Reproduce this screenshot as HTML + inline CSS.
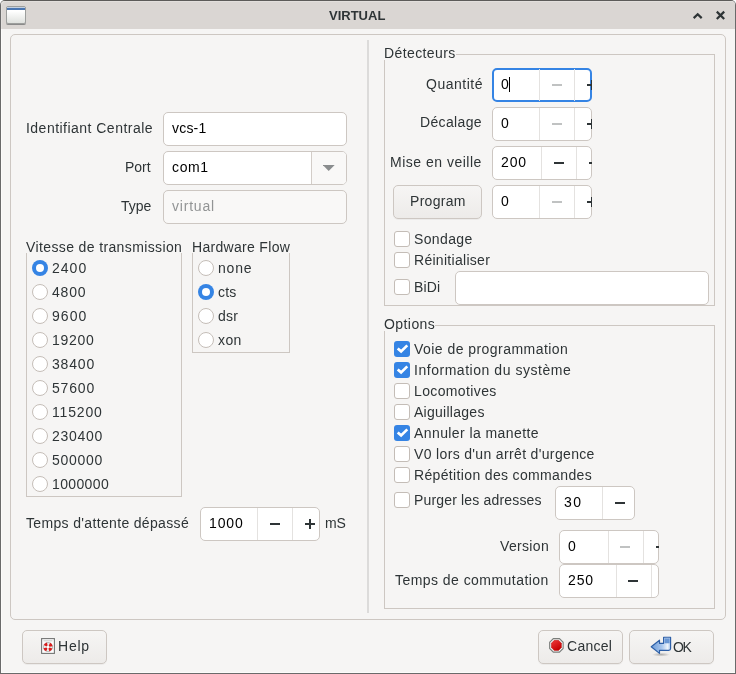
<!DOCTYPE html>
<html><head><meta charset="utf-8"><style>
html,body{margin:0;padding:0;background:#fff;width:736px;height:674px;overflow:hidden;position:relative;}
body{font-family:"Liberation Sans",sans-serif;}
#win{position:absolute;left:0;top:0;width:734px;height:672px;border:1px solid #6a6a6a;border-top-color:#5c5b59;border-radius:5px 5px 0 0;background:#f6f5f4;box-shadow:inset 1px 0 0 #fcfbfa, inset 0 -1px 0 #fcfbfa;}
#title{position:absolute;left:1px;top:1px;width:734px;height:28px;background:#dad6d3;border-radius:4px 4px 0 0;box-shadow:inset 1px 1px 0 #e2dfdc;}
#wicon{position:absolute;left:6px;top:6px;width:18px;height:16px;border:1px solid #9c9e9c;border-radius:2px;background:linear-gradient(#fff 25%,#dfe1de);box-shadow:0 1px 0 #8a8a8a;}
#wicon .blue{position:absolute;left:0px;top:1px;width:18px;height:2px;background:#4a76b2;box-shadow:0 -1px 0 #c4d0e0;}
.tt{position:absolute;will-change:transform;font:bold 13px/16px "Liberation Sans",sans-serif;color:#2e3436;white-space:nowrap;}
.t{position:absolute;font-size:14px;line-height:16px;white-space:nowrap;will-change:transform;}
.mframe{position:absolute;border:1px solid #cdc7c2;border-radius:5px;}
.frame{position:absolute;border:1px solid #cdc7c2;}
.lblbg{position:absolute;background:#f6f5f4;}
.sep{position:absolute;background:#dcdbda;}
.entry{position:absolute;box-sizing:border-box;border:1px solid #cdc7c2;border-radius:5px;background:#fff;}
.entry.focus{border:2px solid #3584e4;}
.div{position:absolute;width:1px;background:#e4e2e0;}
.bar{position:absolute;}
.clip{position:absolute;overflow:hidden;}
.radio{position:absolute;box-sizing:border-box;width:16px;height:16px;border-radius:50%;border:1px solid #c4bdb7;background:#fff;}
.radio.on{border:none;background:#3584e4;}
.radio.on::after{content:"";position:absolute;left:4px;top:4px;width:8px;height:8px;border-radius:50%;background:#fff;}
.chk{position:absolute;box-sizing:border-box;width:16px;height:16px;border-radius:3px;border:1px solid #c4bdb7;background:#fff;}
.chk.on{border:none;background:#3584e4;}
.chk svg{position:absolute;left:0;top:0;}
.btn{position:absolute;box-sizing:border-box;border:1px solid #cdc7c2;border-radius:5px;background:linear-gradient(#f6f5f4,#edebe9);box-shadow:0 1px 0 rgba(0,0,0,0.04);}
</style></head><body>
<div id="win"></div>
<div id="title"></div>
<div id="wicon"><div class="blue"></div></div>
<div class="tt" style="left:329px;top:8px;">VIRTUAL</div>
<svg style="position:absolute;left:690px;top:9px" width="40" height="14" viewBox="0 0 40 14"><path d="M3.7 9.1 L7.7 5.2 L11.7 9.1" fill="none" stroke="#2e3436" stroke-width="2.2"/><path d="M26.8 2.6 L34.2 10 M34.2 2.6 L26.8 10" fill="none" stroke="#2e3436" stroke-width="2.2"/></svg>
<div class="mframe" style="left:10px;top:34px;width:714px;height:584px"></div>
<div class="sep" style="left:367px;top:40px;width:2px;height:573px"></div>
<div class="t" style="left:25.7px;top:120.0px;letter-spacing:0.474px;color:#2e3436;">Identifiant Centrale</div>
<div class="entry" style="left:163px;top:112px;width:184px;height:34px;background:#fff"></div>
<div class="t" style="left:172.4px;top:120.0px;letter-spacing:0.197px;color:#000;">vcs-1</div>
<div class="t" style="left:125.4px;top:159.0px;letter-spacing:-0.005px;color:#2e3436;">Port</div>
<div class="entry" style="left:163px;top:151px;width:184px;height:34px"></div>
<div style="position:absolute;left:312px;top:152px;width:34px;height:32px;background:#f9f8f7;border-radius:0 4px 4px 0"></div>
<div class="div" style="left:311px;top:152px;height:32px;background:#d3cdc8"></div>
<svg style="position:absolute;left:323px;top:165px" width="13" height="7" viewBox="0 0 13 7"><path d="M-0.3 0 L11.7 0 L5.7 6 Z" fill="#8a8d8e"/></svg>
<div class="t" style="left:172.0px;top:159.0px;letter-spacing:0.640px;color:#000;">com1</div>
<div class="t" style="left:121.2px;top:198.0px;letter-spacing:0.002px;color:#2e3436;">Type</div>
<div class="entry" style="left:163px;top:190px;width:184px;height:34px;background:#f9f8f7"></div>
<div class="t" style="left:172.4px;top:198.0px;letter-spacing:0.793px;color:#929495;">virtual</div>
<div class="t" style="left:26.2px;top:239.0px;letter-spacing:0.377px;color:#2e3436;">Vitesse de transmission</div>
<div class="frame" style="left:26px;top:253px;width:154px;height:243px;border-top:none"></div>
<div class="radio on" style="left:32px;top:260px"></div>
<div class="t" style="left:52.1px;top:259.6px;letter-spacing:1.023px;color:#2e3436;">2400</div>
<div class="radio" style="left:32px;top:284px"></div>
<div class="t" style="left:52.3px;top:283.6px;letter-spacing:0.795px;color:#2e3436;">4800</div>
<div class="radio" style="left:32px;top:308px"></div>
<div class="t" style="left:52.0px;top:307.6px;letter-spacing:1.067px;color:#2e3436;">9600</div>
<div class="radio" style="left:32px;top:332px"></div>
<div class="t" style="left:52.0px;top:331.6px;letter-spacing:0.716px;color:#2e3436;">19200</div>
<div class="radio" style="left:32px;top:356px"></div>
<div class="t" style="left:52.3px;top:355.6px;letter-spacing:0.825px;color:#2e3436;">38400</div>
<div class="radio" style="left:32px;top:380px"></div>
<div class="t" style="left:52.2px;top:379.6px;letter-spacing:0.822px;color:#2e3436;">57600</div>
<div class="radio" style="left:32px;top:404px"></div>
<div class="t" style="left:52.0px;top:403.6px;letter-spacing:0.827px;color:#2e3436;">115200</div>
<div class="radio" style="left:32px;top:428px"></div>
<div class="t" style="left:52.1px;top:427.6px;letter-spacing:0.722px;color:#2e3436;">230400</div>
<div class="radio" style="left:32px;top:452px"></div>
<div class="t" style="left:52.2px;top:451.6px;letter-spacing:0.712px;color:#2e3436;">500000</div>
<div class="radio" style="left:32px;top:476px"></div>
<div class="t" style="left:52.0px;top:475.6px;letter-spacing:0.367px;color:#2e3436;">1000000</div>
<div class="t" style="left:191.8px;top:239.0px;letter-spacing:0.308px;color:#2e3436;">Hardware Flow</div>
<div class="frame" style="left:192px;top:253px;width:96px;height:99px;border-top:none"></div>
<div class="radio" style="left:198px;top:260px"></div>
<div class="t" style="left:218.0px;top:259.6px;letter-spacing:0.786px;color:#2e3436;">none</div>
<div class="radio on" style="left:198px;top:284px"></div>
<div class="t" style="left:218.0px;top:283.6px;letter-spacing:0.233px;color:#2e3436;">cts</div>
<div class="radio" style="left:198px;top:308px"></div>
<div class="t" style="left:218.0px;top:307.6px;letter-spacing:0.226px;color:#2e3436;">dsr</div>
<div class="radio" style="left:198px;top:332px"></div>
<div class="t" style="left:218.3px;top:331.6px;letter-spacing:0.404px;color:#2e3436;">xon</div>
<div class="t" style="left:26.1px;top:514.7px;letter-spacing:0.341px;color:#2e3436;">Temps d'attente dépassé</div>
<div class="entry" style="left:200px;top:507px;width:120px;height:34px;"></div>
<div class="div" style="left:257px;top:508px;height:32px"></div>
<div class="div" style="left:292px;top:508px;height:32px"></div>
<div class="t" style="left:209.0px;top:515.0px;letter-spacing:0.864px;color:#000;">1000</div>
<div class="bar" style="left:270px;top:523px;width:10px;height:2px;background:#2e3436"></div>
<div class="clip" style="left:293px;top:508px;width:27px;height:32px"><div class="bar" style="left:12px;top:15px;width:10px;height:2px;background:#2e3436"></div><div class="bar" style="left:16px;top:11px;width:2px;height:10px;background:#2e3436"></div></div>
<div class="t" style="left:325.0px;top:514.7px;letter-spacing:-0.189px;color:#2e3436;">mS</div>
<div class="frame" style="left:384px;top:54px;width:329px;height:250px"></div>
<div class="lblbg" style="left:383px;top:46px;width:73px;height:14px"></div>
<div class="t" style="left:384.0px;top:45.0px;letter-spacing:0.399px;color:#2e3436;">Détecteurs</div>
<div class="t" style="left:425.7px;top:75.7px;letter-spacing:0.514px;color:#2e3436;">Quantité</div>
<div class="entry focus" style="left:492px;top:68px;width:100px;height:34px;"></div>
<div class="div" style="left:539px;top:69px;height:32px"></div>
<div class="div" style="left:574px;top:69px;height:32px"></div>
<div class="t" style="left:501.2px;top:76.0px;letter-spacing:0.000px;color:#000;">0</div>
<div class="bar" style="left:552px;top:84px;width:10px;height:2px;background:#c0c2c2"></div>
<div class="clip" style="left:575px;top:69px;width:17px;height:32px"><div class="bar" style="left:12px;top:15px;width:10px;height:2px;background:#2e3436"></div><div class="bar" style="left:16px;top:11px;width:2px;height:10px;background:#2e3436"></div></div>
<div style="position:absolute;left:509px;top:77px;width:1px;height:15px;background:#000"></div>
<div class="t" style="left:420.4px;top:114.3px;letter-spacing:0.357px;color:#2e3436;">Décalage</div>
<div class="entry" style="left:492px;top:107px;width:100px;height:34px;"></div>
<div class="div" style="left:539px;top:108px;height:32px"></div>
<div class="div" style="left:574px;top:108px;height:32px"></div>
<div class="t" style="left:501.2px;top:115.0px;letter-spacing:0.000px;color:#000;">0</div>
<div class="bar" style="left:552px;top:123px;width:10px;height:2px;background:#c0c2c2"></div>
<div class="clip" style="left:575px;top:108px;width:17px;height:32px"><div class="bar" style="left:12px;top:15px;width:10px;height:2px;background:#2e3436"></div><div class="bar" style="left:16px;top:11px;width:2px;height:10px;background:#2e3436"></div></div>
<div class="t" style="left:390.4px;top:154.0px;letter-spacing:0.500px;color:#2e3436;">Mise en veille</div>
<div class="entry" style="left:492px;top:146px;width:100px;height:34px;"></div>
<div class="div" style="left:541px;top:147px;height:32px"></div>
<div class="div" style="left:576px;top:147px;height:32px"></div>
<div class="t" style="left:501.1px;top:154.0px;letter-spacing:0.899px;color:#000;">200</div>
<div class="bar" style="left:554px;top:162px;width:10px;height:2px;background:#2e3436"></div>
<div class="clip" style="left:577px;top:147px;width:15px;height:32px"><div class="bar" style="left:12px;top:15px;width:10px;height:2px;background:#2e3436"></div><div class="bar" style="left:16px;top:11px;width:2px;height:10px;background:#2e3436"></div></div>
<div class="btn" style="left:393px;top:185px;width:89px;height:34px"></div>
<div class="t" style="left:409.6px;top:193.0px;letter-spacing:0.300px;color:#2e3436;">Program</div>
<div class="entry" style="left:492px;top:185px;width:100px;height:34px;"></div>
<div class="div" style="left:539px;top:186px;height:32px"></div>
<div class="div" style="left:574px;top:186px;height:32px"></div>
<div class="t" style="left:501.2px;top:193.0px;letter-spacing:0.000px;color:#000;">0</div>
<div class="bar" style="left:552px;top:201px;width:10px;height:2px;background:#c0c2c2"></div>
<div class="clip" style="left:575px;top:186px;width:17px;height:32px"><div class="bar" style="left:12px;top:15px;width:10px;height:2px;background:#2e3436"></div><div class="bar" style="left:16px;top:11px;width:2px;height:10px;background:#2e3436"></div></div>
<div class="chk" style="left:394px;top:231px"></div>
<div class="t" style="left:414.1px;top:230.7px;letter-spacing:0.361px;color:#2e3436;">Sondage</div>
<div class="chk" style="left:394px;top:252px"></div>
<div class="t" style="left:413.8px;top:251.8px;letter-spacing:0.287px;color:#2e3436;">Réinitialiser</div>
<div class="chk" style="left:394px;top:279px"></div>
<div class="t" style="left:413.8px;top:278.6px;letter-spacing:0.153px;color:#2e3436;">BiDi</div>
<div class="entry" style="left:455px;top:271px;width:254px;height:34px;background:#fff"></div>
<div class="frame" style="left:384px;top:325px;width:329px;height:282px"></div>
<div class="lblbg" style="left:383px;top:317px;width:52px;height:14px"></div>
<div class="t" style="left:384.0px;top:315.7px;letter-spacing:0.432px;color:#2e3436;">Options</div>
<div class="chk on" style="left:394px;top:341px"><svg width="16" height="16" viewBox="0 0 16 16"><path d="M3.7 7.5 L7.1 10.4 L13.3 4.4" fill="none" stroke="#fff" stroke-width="2.7" stroke-linecap="butt" stroke-linejoin="miter"/></svg></div>
<div class="t" style="left:414.2px;top:340.7px;letter-spacing:0.455px;color:#2e3436;">Voie de programmation</div>
<div class="chk on" style="left:394px;top:362px"><svg width="16" height="16" viewBox="0 0 16 16"><path d="M3.7 7.5 L7.1 10.4 L13.3 4.4" fill="none" stroke="#fff" stroke-width="2.7" stroke-linecap="butt" stroke-linejoin="miter"/></svg></div>
<div class="t" style="left:413.7px;top:361.7px;letter-spacing:0.533px;color:#2e3436;">Information du système</div>
<div class="chk" style="left:394px;top:383px"></div>
<div class="t" style="left:413.8px;top:382.7px;letter-spacing:0.370px;color:#2e3436;">Locomotives</div>
<div class="chk" style="left:394px;top:404px"></div>
<div class="t" style="left:414.2px;top:403.7px;letter-spacing:0.270px;color:#2e3436;">Aiguillages</div>
<div class="chk on" style="left:394px;top:425px"><svg width="16" height="16" viewBox="0 0 16 16"><path d="M3.7 7.5 L7.1 10.4 L13.3 4.4" fill="none" stroke="#fff" stroke-width="2.7" stroke-linecap="butt" stroke-linejoin="miter"/></svg></div>
<div class="t" style="left:414.2px;top:424.7px;letter-spacing:0.412px;color:#2e3436;">Annuler la manette</div>
<div class="chk" style="left:394px;top:446px"></div>
<div class="t" style="left:414.2px;top:445.7px;letter-spacing:0.344px;color:#2e3436;">V0 lors d'un arrêt d'urgence</div>
<div class="chk" style="left:394px;top:467px"></div>
<div class="t" style="left:413.8px;top:466.7px;letter-spacing:0.348px;color:#2e3436;">Répétition des commandes</div>
<div class="chk" style="left:394px;top:492px"></div>
<div class="t" style="left:413.8px;top:492.2px;letter-spacing:0.167px;color:#2e3436;">Purger les adresses</div>
<div class="entry" style="left:555px;top:486px;width:80px;height:34px;"></div>
<div class="div" style="left:602px;top:487px;height:32px"></div>
<div class="t" style="left:564.3px;top:494.0px;letter-spacing:1.488px;color:#000;">30</div>
<div class="bar" style="left:615px;top:502px;width:10px;height:2px;background:#2e3436"></div>
<div class="t" style="left:499.9px;top:538.2px;letter-spacing:0.333px;color:#2e3436;">Version</div>
<div class="entry" style="left:559px;top:530px;width:100px;height:34px;"></div>
<div class="div" style="left:608px;top:531px;height:32px"></div>
<div class="div" style="left:643px;top:531px;height:32px"></div>
<div class="t" style="left:568.2px;top:538.0px;letter-spacing:0.000px;color:#000;">0</div>
<div class="bar" style="left:620px;top:546px;width:10px;height:2px;background:#c0c2c2"></div>
<div class="clip" style="left:644px;top:531px;width:15px;height:32px"><div class="bar" style="left:12px;top:15px;width:10px;height:2px;background:#2e3436"></div><div class="bar" style="left:16px;top:11px;width:2px;height:10px;background:#2e3436"></div></div>
<div class="t" style="left:395.1px;top:572.0px;letter-spacing:0.453px;color:#2e3436;">Temps de commutation</div>
<div class="entry" style="left:559px;top:564px;width:100px;height:34px;"></div>
<div class="div" style="left:616px;top:565px;height:32px"></div>
<div class="div" style="left:651px;top:565px;height:32px"></div>
<div class="t" style="left:568.1px;top:572.0px;letter-spacing:0.899px;color:#000;">250</div>
<div class="bar" style="left:628px;top:580px;width:10px;height:2px;background:#2e3436"></div>
<div class="clip" style="left:652px;top:565px;width:7px;height:32px"><div class="bar" style="left:12px;top:15px;width:10px;height:2px;background:#2e3436"></div><div class="bar" style="left:16px;top:11px;width:2px;height:10px;background:#2e3436"></div></div>
<div class="btn" style="left:22px;top:630px;width:85px;height:34px"></div>
<svg style="position:absolute;left:36px;top:634px" width="24" height="24" viewBox="0 0 24 24"><rect x="5.6" y="4.6" width="12.8" height="14.8" fill="#fdfdfd" stroke="#737573" stroke-width="1.1"/><rect x="7.5" y="6.3" width="9" height="1" fill="#c8cac8"/><circle cx="12" cy="13" r="3.1" fill="none" stroke="#e9ecea" stroke-width="3.2"/><circle cx="12" cy="13" r="4.6" fill="none" stroke="#9a9c9a" stroke-width="0.6"/><circle cx="12" cy="13" r="3.1" fill="none" stroke="#d81c1c" stroke-width="3.2" stroke-dasharray="2.7 2.17" stroke-dashoffset="3.785"/><circle cx="12" cy="13" r="1.1" fill="#fff"/></svg>
<div class="t" style="left:57.8px;top:637.6px;letter-spacing:0.767px;color:#2e3436;">Help</div>
<div class="btn" style="left:538px;top:630px;width:85px;height:34px"></div>
<svg style="position:absolute;left:544px;top:634px" width="24" height="24" viewBox="0 0 24 24"><defs><linearGradient id="rg" x1="0" y1="0" x2="0.6" y2="1"><stop offset="0" stop-color="#f03a3a"/><stop offset="1" stop-color="#c40000"/></linearGradient></defs><polygon points="9.35,4.65 15.45,4.65 19.15,8.35 19.15,14.45 15.45,18.15 9.35,18.15 5.65,14.45 5.65,8.35" fill="#f4f8f6" stroke="#7b7e7b" stroke-width="1.1"/><polygon points="10.25,6.35 14.55,6.35 17.45,9.25 17.45,13.55 14.55,16.45 10.25,16.45 7.35,13.55 7.35,9.25" fill="url(#rg)" stroke="#b00000" stroke-width="0.4"/></svg>
<div class="t" style="left:566.9px;top:637.6px;letter-spacing:0.280px;color:#2e3436;">Cancel</div>
<div class="btn" style="left:629px;top:630px;width:85px;height:34px"></div>
<svg style="position:absolute;left:646px;top:632px" width="30" height="28" viewBox="0 0 30 28"><defs><linearGradient id="ag" x1="0" y1="0" x2="1" y2="0"><stop offset="0" stop-color="#6c9bd9"/><stop offset="0.55" stop-color="#a9c6ec"/><stop offset="0.85" stop-color="#eef4fb"/><stop offset="1" stop-color="#9dbce6"/></linearGradient><radialGradient id="sg" cx="0.5" cy="0.5" r="0.5"><stop offset="0" stop-color="#000" stop-opacity="0.28"/><stop offset="1" stop-color="#000" stop-opacity="0"/></radialGradient></defs><ellipse cx="15" cy="22.6" rx="9" ry="2" fill="url(#sg)"/><path d="M5.2 14.75 L13.5 8.2 L13.5 11.3 L17.6 11.3 L17.6 5.2 L24.6 5.2 L24.6 16.4 Q24.6 18.3 22.7 18.3 L13.5 18.3 L13.5 21.4 Z" fill="url(#ag)" stroke="#2c5ea6" stroke-width="1.15" stroke-linejoin="round"/><rect x="18.6" y="6.3" width="5" height="5" fill="#6a97d4"/></svg>
<div class="t" style="left:673.0px;top:638.5px;letter-spacing:-1.400px;color:#2e3436;">OK</div>
</body></html>
